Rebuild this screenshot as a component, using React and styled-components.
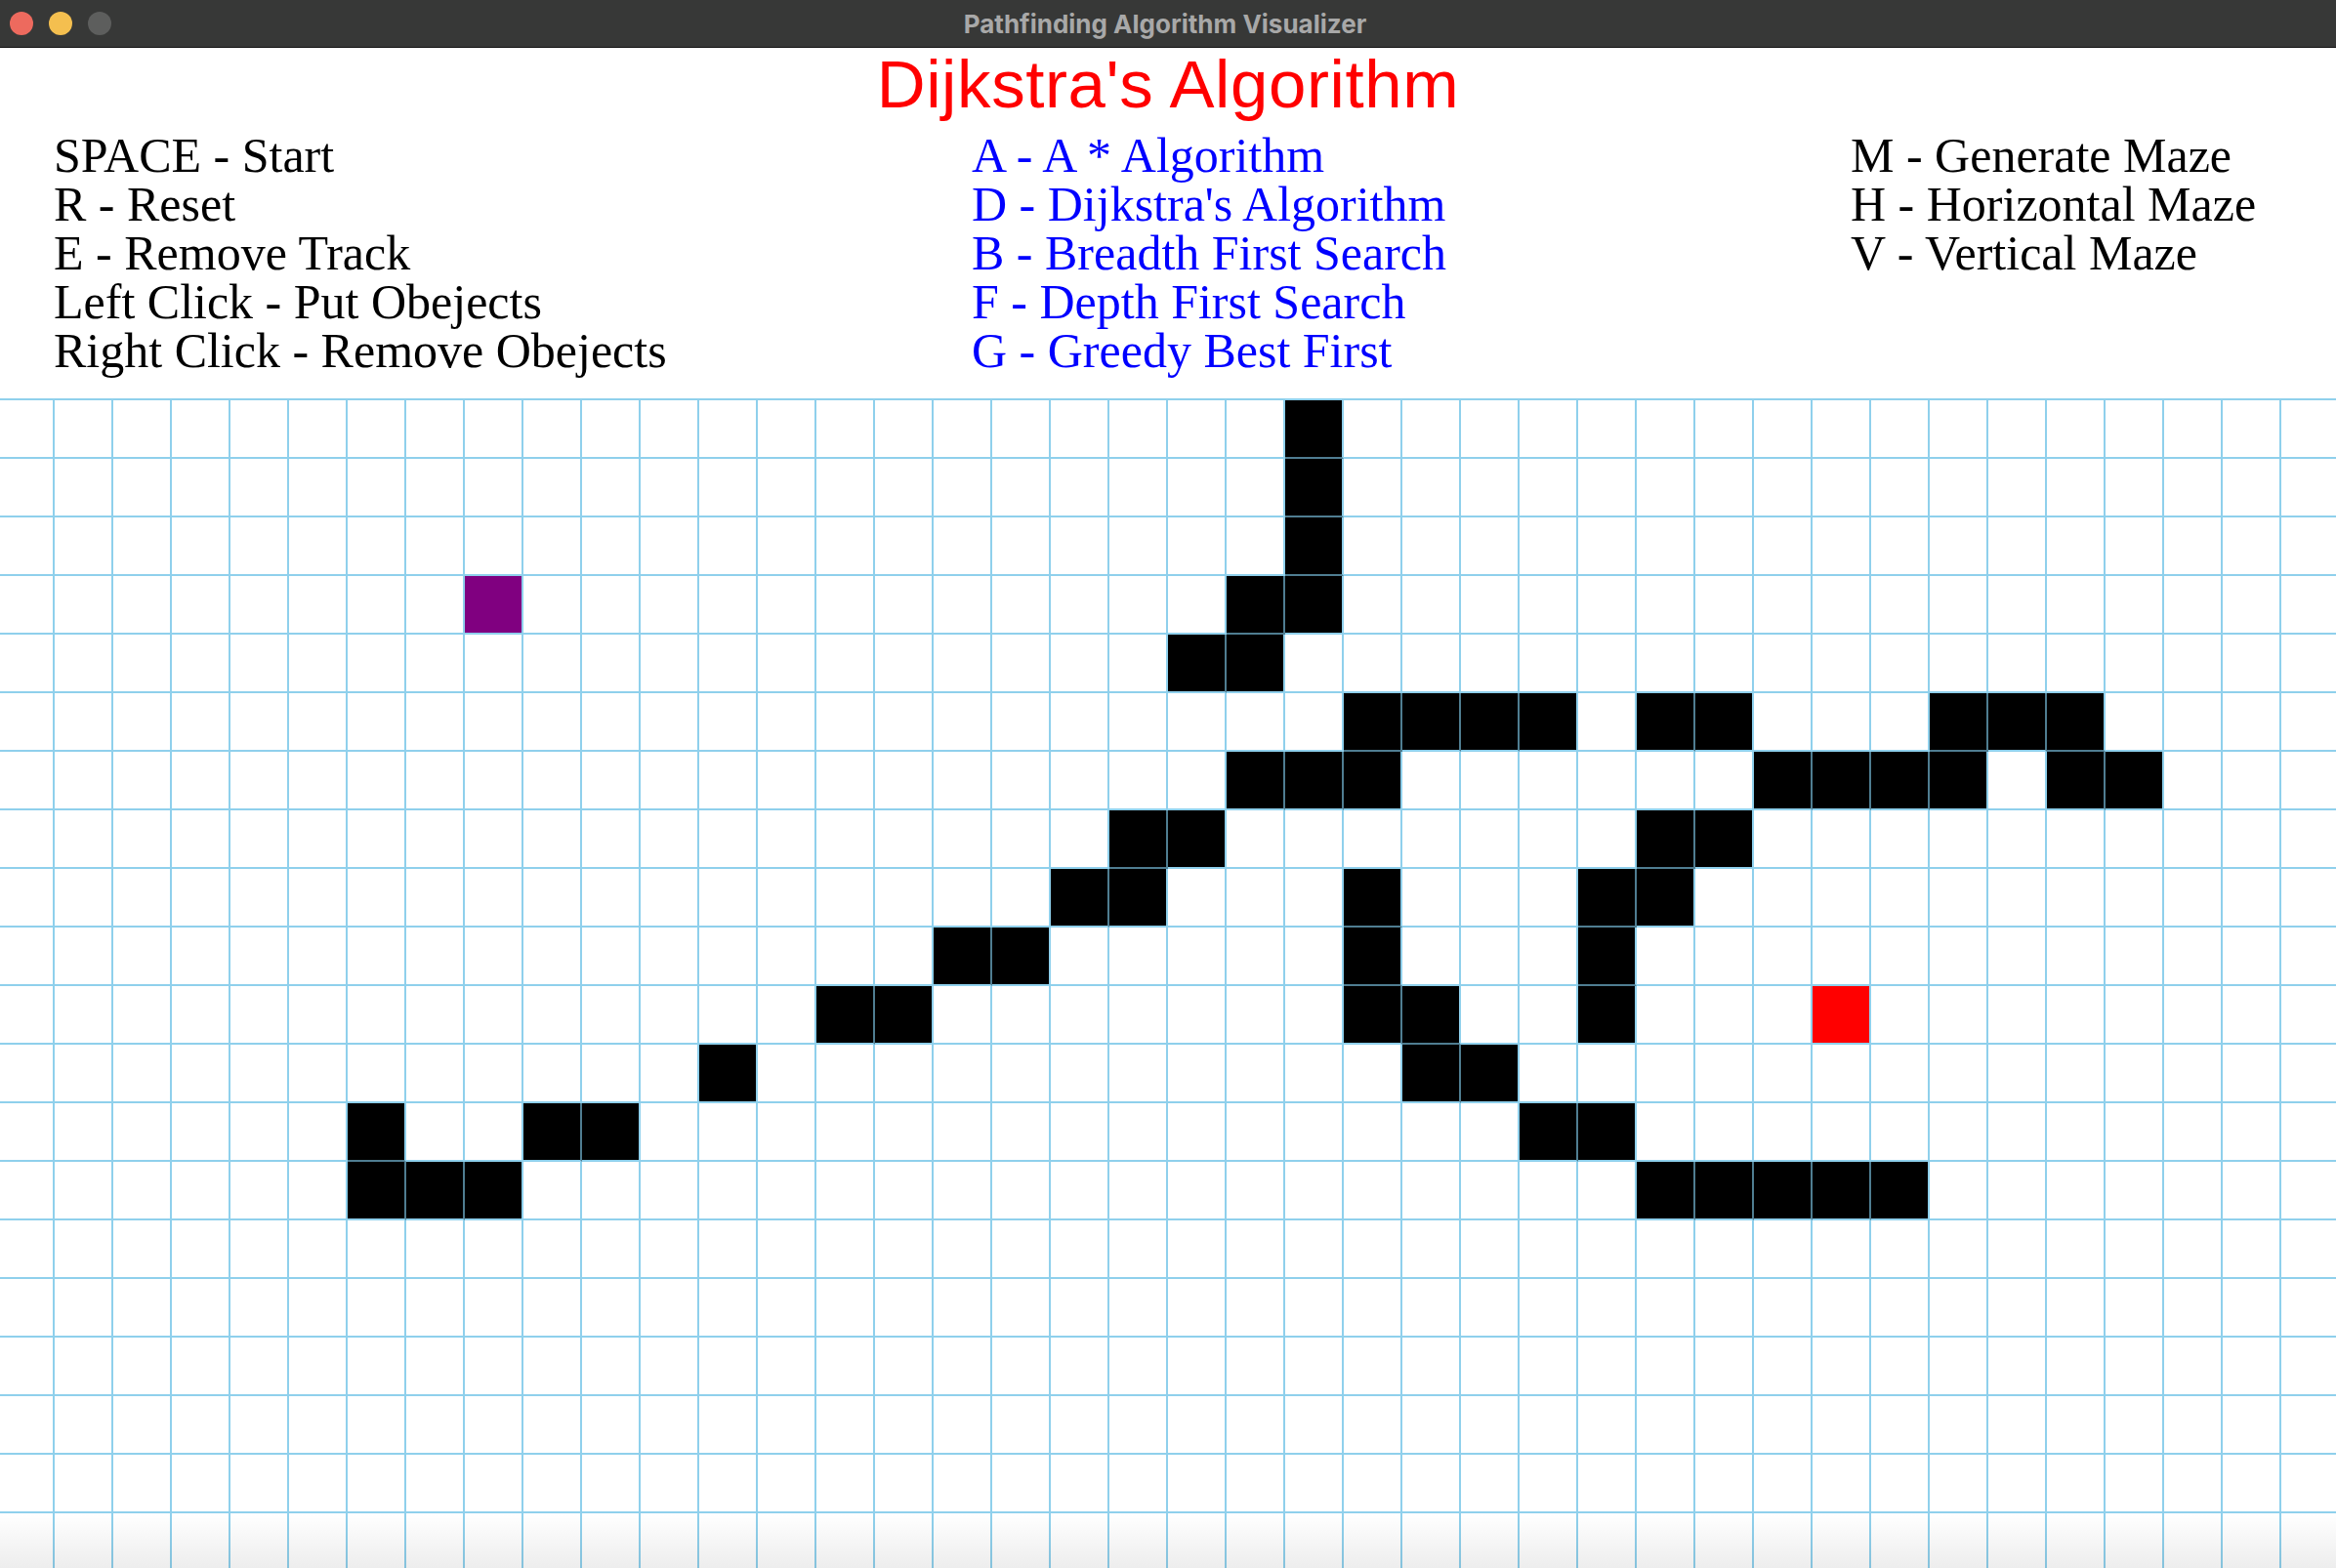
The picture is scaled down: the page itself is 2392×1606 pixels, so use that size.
import React from 'react'
import styled, { createGlobalStyle } from 'styled-components'

const COLS = 40
const ROWS = 20
const LINE = '#8fd0ec'
const LINE_DARK = '#4f7d91'

// walls per row, column indexes
const WALLS = {
  0: [22],
  1: [22],
  2: [22],
  3: [21, 22],
  4: [20, 21],
  5: [23, 24, 25, 26, 28, 29, 33, 34, 35],
  6: [21, 22, 23, 30, 31, 32, 33, 35, 36],
  7: [19, 20, 28, 29],
  8: [18, 19, 23, 27, 28],
  9: [16, 17, 23, 27],
  10: [14, 15, 23, 24, 27],
  11: [12, 24, 25],
  12: [6, 9, 10, 26, 27],
  13: [6, 7, 8, 28, 29, 30, 31, 32],
}
const START = [3, 8]
const END = [10, 31]

const isWall = (r, c) => (WALLS[r] || []).includes(c)

const kindOf = (r, c) => {
  if (r === START[0] && c === START[1]) return 'start'
  if (r === END[0] && c === END[1]) return 'end'
  if (isWall(r, c)) return 'wall'
  return 'empty'
}

const FILL = {
  empty: '#ffffff',
  wall: '#000000',
  start: '#800080',
  end: '#ff0000',
}

const GlobalStyle = createGlobalStyle`
  html, body {
    margin: 0;
    padding: 0;
    background: #ffffff;
    overflow: hidden;
  }
`

const Window = styled.div`
  display: flex;
  flex-direction: column;
  width: 100vw;
  height: 100vh;
  overflow: hidden;
  position: relative;
`

const TitleBar = styled.div`
  display: grid;
  grid-template-columns: 1fr auto 1fr;
  align-items: center;
  height: 48px;
  flex-shrink: 0;
  background: #373837;
  border-bottom: 1px solid #121212;
  padding: 0 16px 0 10px;
`

const Lights = styled.div`
  display: flex;
  gap: 16px;
`

const Light = styled.span`
  width: 24px;
  height: 24px;
  border-radius: 50%;
  background: ${({ $color }) => $color};
`

const WindowTitle = styled.div`
  font-family: Inter, 'Liberation Sans', sans-serif;
  font-weight: 700;
  font-size: 26px;
  color: #a8a8a8;
  padding-top: 1px;
`

const Heading = styled.h1`
  margin: 0;
  font-family: 'Liberation Sans', Arial, sans-serif;
  font-weight: 400;
  font-size: 69px;
  line-height: 76px;
  color: #ff0000;
  text-align: center;
  letter-spacing: 0.6px;
`

const Legend = styled.div`
  display: grid;
  grid-template-columns: 940px 900px 1fr;
  padding: 9px 0 0 55px;
`

const KeyList = styled.div`
  display: flex;
  flex-direction: column;
  font-family: 'Liberation Serif', 'Times New Roman', serif;
  font-size: 50px;
  line-height: 50px;
  color: ${({ $color }) => $color};
  white-space: nowrap;
`

const Board = styled.div`
  display: grid;
  grid-template-columns: repeat(${COLS}, 60px);
  grid-auto-rows: 60px;
  margin: 24px 0 0 -4px;
  border-top: 2px solid ${LINE};
  position: relative;
`

const Cell = styled.div`
  box-sizing: border-box;
  background: ${({ $kind }) => FILL[$kind]};
  border-right: 2px solid ${({ $joinRight }) => ($joinRight ? LINE_DARK : LINE)};
  border-bottom: 2px solid ${({ $joinDown }) => ($joinDown ? LINE_DARK : LINE)};
`

const BottomShade = styled.div`
  position: absolute;
  left: 0;
  right: 0;
  bottom: 0;
  height: 56px;
  pointer-events: none;
  background: linear-gradient(to bottom, rgba(0, 0, 0, 0), rgba(0, 0, 0, 0.07));
`

const CONTROLS = [
  'SPACE - Start',
  'R - Reset',
  'E - Remove Track',
  'Left Click - Put Obejects',
  'Right Click - Remove Obejects',
]

const ALGORITHMS = [
  'A - A * Algorithm',
  "D - Dijkstra's Algorithm",
  'B - Breadth First Search',
  'F - Depth First Search',
  'G - Greedy Best First',
]

const MAZES = ['M - Generate Maze', 'H - Horizontal Maze', 'V - Vertical Maze']

function Grid() {
  const cells = []
  for (let r = 0; r < ROWS; r++) {
    for (let c = 0; c < COLS; c++) {
      const wall = isWall(r, c)
      cells.push(
        <Cell
          key={`${r}-${c}`}
          $kind={kindOf(r, c)}
          $joinRight={wall && isWall(r, c + 1)}
          $joinDown={wall && isWall(r + 1, c)}
        />
      )
    }
  }
  return <Board>{cells}</Board>
}

export default function App() {
  return (
    <Window>
      <GlobalStyle />
      <TitleBar>
        <Lights>
          <Light $color="#ed6a5e" />
          <Light $color="#f4bf4f" />
          <Light $color="#5d5e5d" />
        </Lights>
        <WindowTitle>Pathfinding Algorithm Visualizer</WindowTitle>
        <span />
      </TitleBar>
      <Heading>Dijkstra's Algorithm</Heading>
      <Legend>
        <KeyList $color="#000000">
          {CONTROLS.map((t) => (
            <span key={t}>{t}</span>
          ))}
        </KeyList>
        <KeyList $color="#0000ff">
          {ALGORITHMS.map((t) => (
            <span key={t}>{t}</span>
          ))}
        </KeyList>
        <KeyList $color="#000000">
          {MAZES.map((t) => (
            <span key={t}>{t}</span>
          ))}
        </KeyList>
      </Legend>
      <Grid />
      <BottomShade />
    </Window>
  )
}
